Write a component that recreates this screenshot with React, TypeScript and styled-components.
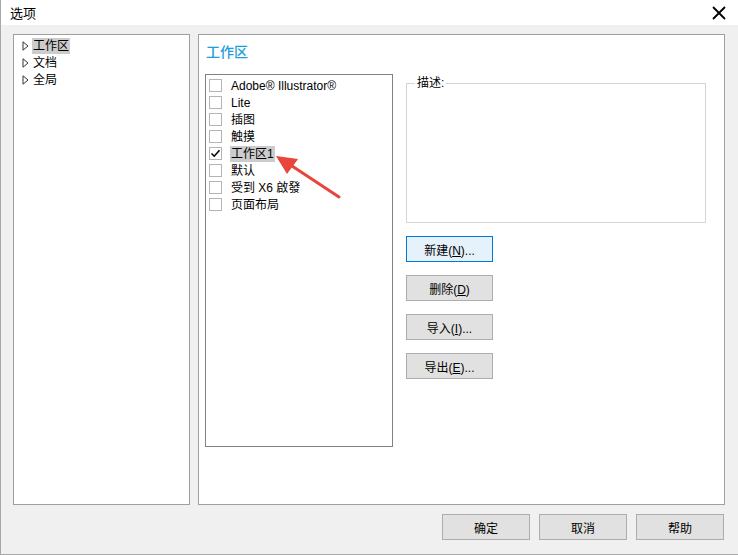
import React from "react";
import styled, { createGlobalStyle } from "styled-components";

const Global = createGlobalStyle`
  html, body { margin: 0; padding: 0; background: #fff; }
  * { box-sizing: border-box; }
`;

const FONT = `"Liberation Sans", "Noto Sans CJK SC", sans-serif`;

const Window = styled.div`
  position: relative;
  width: 738px;
  height: 555px;
  display: flex;
  flex-direction: column;
  border-left: 1px solid #a8a8a8;
  border-bottom: 1px solid #a8a8a8;
  font-family: ${FONT};
  font-size: 12px;
  color: #000;
  background: #f0f0f0;
`;

const TitleBar = styled.div`
  height: 25px;
  flex: none;
  background: #fff;
  display: flex;
  align-items: center;
  justify-content: space-between;
  padding: 0 10px 0 9px;
  font-size: 13px;
`;

const CloseBtn = styled.div`
  width: 18px;
  height: 18px;
  display: flex;
  align-items: center;
  justify-content: center;
`;

const Body = styled.div`
  flex: 1;
  display: flex;
  flex-direction: column;
  padding: 9px 13px 0 12px;
`;

const MainRow = styled.div`
  display: flex;
  gap: 8px;
  height: 471px;
`;

const Panel = styled.div<{ $w: number }>`
  width: ${(p) => p.$w}px;
  height: 100%;
  background: #fff;
  border: 1px solid #a0a0a0;
`;

const Tree = styled(Panel)`
  padding: 2px 0 0 8px;
`;

const TreeItem = styled.div`
  height: 17px;
  display: flex;
  align-items: center;
  gap: 3px;
`;

const TreeLabel = styled.span<{ $sel?: boolean }>`
  background: ${(p) => (p.$sel ? "#cccccc" : "transparent")};
  padding: 0 1px;
  line-height: 16px;
`;

const RightPanel = styled(Panel)`
  display: flex;
  flex-direction: column;
  padding: 6px 0 0 6px;
`;

const Heading = styled.div`
  color: #1b9de0;
  font-size: 14px;
  font-weight: 500;
  height: 22px;
  line-height: 22px;
  padding-left: 1px;
  margin-bottom: 11px;
`;

const Content = styled.div`
  display: flex;
  gap: 13px;
`;

const ListBox = styled.div`
  width: 188px;
  height: 373px;
  border: 1px solid #828282;
  padding: 2px 0 0 3px;
`;

const ListRow = styled.div`
  height: 17px;
  display: flex;
  align-items: center;
  gap: 8px;
`;

const Check = styled.div`
  width: 13px;
  height: 13px;
  border: 1px solid #b4b4b4;
  background: #fff;
  display: flex;
  align-items: center;
  justify-content: center;
`;

const ItemText = styled.span<{ $sel?: boolean }>`
  background: ${(p) => (p.$sel ? "#cccccc" : "transparent")};
  padding: 0 1px;
  line-height: 16px;
`;

const Side = styled.div`
  display: flex;
  flex-direction: column;
  padding-top: 2px;
`;

const Group = styled.div`
  position: relative;
  width: 300px;
  height: 140px;
  margin-top: 7px;
  border: 1px solid #d5d5d5;
`;

const GroupLabel = styled.span`
  position: absolute;
  top: -9px;
  left: 8px;
  padding: 0 2px;
  background: #fff;
  line-height: 16px;
`;

const Buttons = styled.div`
  display: flex;
  flex-direction: column;
  gap: 13px;
  margin-top: 13px;
`;

const Btn = styled.button<{ $focus?: boolean; $w?: number }>`
  width: ${(p) => p.$w ?? 87}px;
  height: 26px;
  background: ${(p) => (p.$focus ? "#e5f1fb" : "#e1e1e1")};
  border: 1px solid ${(p) => (p.$focus ? "#0078d7" : "#adadad")};
  font-family: ${FONT};
  font-size: 12px;
  color: #000;
  padding: 0;
  cursor: default;
  u { text-decoration: underline; }
`;

const Footer = styled.div`
  display: flex;
  justify-content: flex-end;
  gap: 9px;
  padding-top: 9px;
  padding-right: 1px;
`;

const Overlay = styled.svg`
  position: absolute;
  left: 0;
  top: 0;
  pointer-events: none;
`;

const TriIcon = () => (
  <svg width="7" height="10" viewBox="0 0 7 10">
    <path d="M1 0.8 L6 5 L1 9.2 Z" fill="none" stroke="#333" strokeWidth="1" />
  </svg>
);

const CheckMark = () => (
  <svg width="11" height="11" viewBox="0 0 11 11">
    <path d="M1.5 5.5 L4.2 8.2 L9.5 2.2" fill="none" stroke="#000" strokeWidth="1.6" />
  </svg>
);

const items = [
  "Adobe® Illustrator®",
  "Lite",
  "插图",
  "触摸",
  "工作区1",
  "默认",
  "受到 X6 啟發",
  "页面布局",
];

export default function App() {
  return (
    <>
      <Global />
      <Window>
        <TitleBar>
          <span>选项</span>
          <CloseBtn>
            <svg width="14" height="14" viewBox="0 0 14 14">
              <path d="M1 1 L13 13 M13 1 L1 13" stroke="#000" strokeWidth="1.8" />
            </svg>
          </CloseBtn>
        </TitleBar>
        <Body>
          <MainRow>
            <Tree $w={177}>
              <TreeItem>
                <TriIcon />
                <TreeLabel $sel>工作区</TreeLabel>
              </TreeItem>
              <TreeItem>
                <TriIcon />
                <TreeLabel>文档</TreeLabel>
              </TreeItem>
              <TreeItem>
                <TriIcon />
                <TreeLabel>全局</TreeLabel>
              </TreeItem>
            </Tree>
            <RightPanel $w={527}>
              <Heading>工作区</Heading>
              <Content>
                <ListBox>
                  {items.map((t) => (
                    <ListRow key={t}>
                      <Check>{t === "工作区1" && <CheckMark />}</Check>
                      <ItemText $sel={t === "工作区1"}>{t}</ItemText>
                    </ListRow>
                  ))}
                </ListBox>
                <Side>
                  <Group>
                    <GroupLabel>描述:</GroupLabel>
                  </Group>
                  <Buttons>
                    <Btn $focus>
                      新建(<u>N</u>)...
                    </Btn>
                    <Btn>
                      删除(<u>D</u>)
                    </Btn>
                    <Btn>
                      导入(<u>I</u>)...
                    </Btn>
                    <Btn>
                      导出(<u>E</u>)...
                    </Btn>
                  </Buttons>
                </Side>
              </Content>
            </RightPanel>
          </MainRow>
          <Footer>
            <Btn $w={88}>确定</Btn>
            <Btn $w={88}>取消</Btn>
            <Btn $w={88}>帮助</Btn>
          </Footer>
        </Body>
        <Overlay width="738" height="555" viewBox="0 0 738 555">
          <path d="M338 197 L288 164" stroke="#e8453c" strokeWidth="3" strokeLinecap="round" />
          <path d="M275 156 L297 159 L286 174 Z" fill="#e8453c" />
        </Overlay>
      </Window>
    </>
  );
}
